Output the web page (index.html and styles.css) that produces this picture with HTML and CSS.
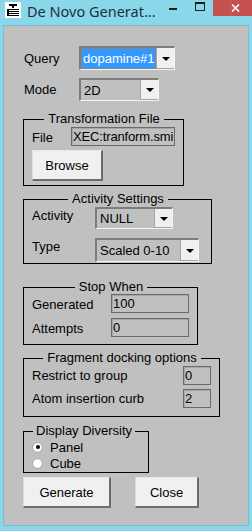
FILE: index.html
```html
<!DOCTYPE html>
<html lang="en">
<head>
  <meta charset="UTF-8"/>
  <title>De Novo Generator</title>
  <link rel="stylesheet" href="styles.css">
</head>
<body>
  <div class="window">
    <div class="titlebar">
      <svg class="app-icon" width="16" height="16" viewBox="0 0 16 16">
        <rect x="0" y="0" width="16" height="16" fill="#fff"/>
        <rect x="4" y="2" width="8" height="2" fill="#000"/>
        <rect x="7" y="4" width="2" height="2" fill="#000"/>
        <rect x="2" y="7" width="12" height="1" fill="#000"/>
        <rect x="2" y="9" width="12" height="1" fill="#000"/>
        <rect x="2" y="11" width="12" height="1" fill="#000"/>
        <rect x="2" y="13" width="12" height="1" fill="#000"/>
        <rect x="2" y="7" width="2" height="7" fill="#000"/>
      </svg>
      <span class="title">De Novo Generat...</span>
      <span class="tb-min"></span>
      <span class="tb-max"></span>
      <span class="tb-close">
        <svg width="9" height="8" viewBox="0 0 9 8">
          <path d="M1 0.5 L8 7.5 M8 0.5 L1 7.5" stroke="#fff" stroke-width="1.6"/>
        </svg>
      </span>
    </div>

    <div class="client">
      <div class="row row-query">
        <label class="lbl lbl-main">Query</label>
        <div class="combo combo-query">
          <span class="combo-value focused">dopamine#1</span>
          <span class="combo-btn"><i class="arrow"></i></span>
        </div>
      </div>
      <div class="row row-mode">
        <label class="lbl lbl-main">Mode</label>
        <div class="combo combo-mode">
          <span class="combo-value">2D</span>
          <span class="combo-btn"><i class="arrow"></i></span>
        </div>
      </div>

      <fieldset class="group group-file">
        <legend class="centered">Transformation File</legend>
        <div class="frow">
          <label class="lbl lbl-file">File</label>
          <input class="field field-file" type="text" value="XEC:tranform.smi" readonly>
        </div>
        <button class="btn btn-browse">Browse</button>
      </fieldset>

      <fieldset class="group group-activity">
        <legend class="centered">Activity Settings</legend>
        <div class="frow">
          <label class="lbl lbl-act">Activity</label>
          <div class="combo combo-null">
            <span class="combo-value">NULL</span>
            <span class="combo-btn"><i class="arrow"></i></span>
          </div>
        </div>
        <div class="frow frow-type">
          <label class="lbl lbl-act">Type</label>
          <div class="combo combo-type">
            <span class="combo-value">Scaled 0-10</span>
            <span class="combo-btn"><i class="arrow"></i></span>
          </div>
        </div>
      </fieldset>

      <fieldset class="group group-stop">
        <legend class="centered">Stop When</legend>
        <div class="frow">
          <label class="lbl lbl-stop">Generated</label>
          <input class="field field-stop" type="text" value="100" readonly>
        </div>
        <div class="frow frow-next">
          <label class="lbl lbl-stop">Attempts</label>
          <input class="field field-stop" type="text" value="0" readonly>
        </div>
      </fieldset>

      <fieldset class="group group-frag">
        <legend class="centered">Fragment docking options</legend>
        <div class="frow">
          <label class="lbl lbl-frag">Restrict to group</label>
          <input class="field field-frag" type="text" value="0" readonly>
        </div>
        <div class="frow frow-atom">
          <label class="lbl lbl-frag">Atom insertion curb</label>
          <input class="field field-frag" type="text" value="2" readonly>
        </div>
      </fieldset>

      <fieldset class="group group-display">
        <legend class="left">Display Diversity</legend>
        <label class="radio-row"><input type="radio" name="disp" checked><span>Panel</span></label>
        <label class="radio-row"><input type="radio" name="disp"><span>Cube</span></label>
      </fieldset>

      <div class="actions">
        <button class="btn btn-generate">Generate</button>
        <button class="btn btn-close">Close</button>
      </div>
    </div>
  </div>
</body>
</html>
```

FILE: styles.css
```css
html, body {
  margin: 0;
  padding: 0;
}
body {
  width: 252px;
  height: 531px;
  background: #8bd7ea;
  font-family: "Liberation Sans", Arial, sans-serif;
  font-size: 13px;
  color: #000;
  overflow: hidden;
}
.window {
  display: flex;
  flex-direction: column;
  height: 531px;
}

/* title bar */
.titlebar {
  height: 25px;
  display: flex;
  align-items: flex-start;
}
.app-icon {
  margin: 2px 0 0 5px;
  flex: none;
}
.title {
  margin: 1px 0 0 6px;
  font-family: "Noto Sans", "Open Sans", sans-serif;
  font-size: 14.5px;
  color: #1b2f44;
  line-height: 20px;
  white-space: nowrap;
}
.tb-min {
  width: 8px;
  height: 2px;
  background: #1d1d1d;
  margin: 8px 0 0 13px;
  flex: none;
}
.tb-max {
  width: 8px;
  height: 6px;
  border: 1px solid #1d1d1d;
  border-top-width: 2px;
  margin: 2px 0 0 18px;
  flex: none;
}
.tb-close {
  width: 45px;
  height: 16px;
  background: #c75050;
  margin-left: 8px;
  display: flex;
  align-items: center;
  justify-content: center;
  flex: none;
}

/* client area */
.client {
  flex: 1;
  margin: 0 3px 5px 3px;
  background: #c0c0c0;
  border: 1px solid #74c0d3;
  padding: 20px 0 0 19px;
  display: flex;
  flex-direction: column;
  align-items: flex-start;
}
.row {
  display: flex;
  align-items: center;
  margin-left: 1px;
}
.row-mode {
  margin-top: 8px;
}
.lbl {
  line-height: 15px;
  white-space: nowrap;
}
.lbl-main { width: 55px; }

/* combo boxes */
.combo {
  display: flex;
  box-sizing: border-box;
  border-style: solid;
  border-width: 2px 1px 1px 2px;
  border-color: #7d7d7d #f4f4f4 #f4f4f4 #7d7d7d;
  background: #c0c0c0;
}
.combo-value {
  flex: 1;
  overflow: hidden;
  white-space: nowrap;
  padding-left: 2px;
  display: flex;
  align-items: center;
  margin: 1px 0 1px 1px;
}
.combo-value.focused {
  background: #3399ff;
  color: #fff;
  border: 1px dotted #c47a2a;
  margin: 0;
  padding-left: 1px;
}
.combo-btn {
  width: 17px;
  flex: none;
  background: #f0f0f0;
  border-left: 1px solid #a3a3a3;
  border-bottom: 1px solid #a3a3a3;
  display: flex;
  align-items: center;
  justify-content: center;
}
.arrow {
  width: 0;
  height: 0;
  border-left: 4px solid transparent;
  border-right: 4px solid transparent;
  border-top: 4px solid #000;
  margin-top: 1px;
}
.combo-query { width: 96px; height: 24px; }
.combo-mode { width: 80px; height: 23px; }
.combo-null { width: 78px; height: 22px; }
.combo-type { width: 104px; height: 24px; }

/* group boxes */
.group {
  margin: 0;
  border: 1px solid #000;
  padding: 1px 7px 4px 8px;
  box-sizing: border-box;
}
.group legend {
  line-height: 14px;
  padding: 0 4px;
}
.group legend.centered {
  margin-left: auto;
  margin-right: auto;
}
.group legend.left {
  padding: 0 3px;
  margin-left: 1px;
}
.frow {
  display: flex;
  align-items: flex-start;
}
.group-file {
  width: 161px;
  margin-top: 11px;
}
.lbl-file { width: 39px; padding-top: 3px; }
.btn-browse {
  margin-top: 4px;
  width: 71px;
  height: 31px;
}
.group-activity {
  width: 189px;
  margin-top: 6px;
  padding-bottom: 1px;
}
.lbl-act { width: 63px; padding-top: 1px; }
.frow-type { margin-top: 9px; }
.group-stop {
  width: 175px;
  margin-top: 16px;
  padding-top: 0;
  padding-bottom: 7px;
}
.lbl-stop { width: 79px; padding-top: 3px; }
.frow-next { margin-top: 5px; }
.group-frag {
  width: 197px;
  margin-top: 6px;
  padding-bottom: 8px;
}
.lbl-frag { width: 151px; padding-top: 2px; }
.frow-atom { margin-top: 4px; }
.group-display {
  width: 126px;
  margin-top: 7px;
  padding: 1px 4px 1px 8px;
}

/* text fields */
.field {
  box-sizing: border-box;
  height: 19px;
  margin: 0;
  padding: 0 0 0 1px;
  border: 1px solid #6a6a6a;
  box-shadow: inset 1px 1px 0 #a6a6a6;
  background: #c0c0c0;
  font-family: "Liberation Sans", Arial, sans-serif;
  font-size: 13px;
  color: #000;
  outline: none;
}
.field-file { width: 104px; letter-spacing: -0.15px; }
.field-stop { width: 78px; }
.field-frag { width: 28px; }

/* radios */
.radio-row {
  display: flex;
  align-items: center;
  height: 16px;
}
.radio-row input {
  appearance: none;
  -webkit-appearance: none;
  width: 11px;
  height: 11px;
  margin: 0 7px 0 0;
  border-radius: 50%;
  border: 1px solid #a9a9a9;
  background: radial-gradient(circle, #ffffff 50%, #dedede 100%);
  box-sizing: border-box;
  display: flex;
  align-items: center;
  justify-content: center;
}
.radio-row input:checked::after {
  content: "";
  width: 4px;
  height: 4px;
  border-radius: 50%;
  background: #000;
}

/* buttons */
.btn {
  box-sizing: border-box;
  padding: 0;
  background: #f0f0f0;
  border: 1px solid #adadad;
  border-top-color: #e8e8e8;
  border-left-color: #dcdcdc;
  border-right: 2px solid #6c6c6c;
  border-bottom: 2px solid #6c6c6c;
  font-family: "Liberation Sans", Arial, sans-serif;
  font-size: 13px;
  color: #000;
}
.actions {
  display: flex;
  gap: 24px;
  margin-top: 4px;
}
.btn-generate { width: 88px; height: 31px; }
.btn-close { width: 64px; height: 31px; }
```
